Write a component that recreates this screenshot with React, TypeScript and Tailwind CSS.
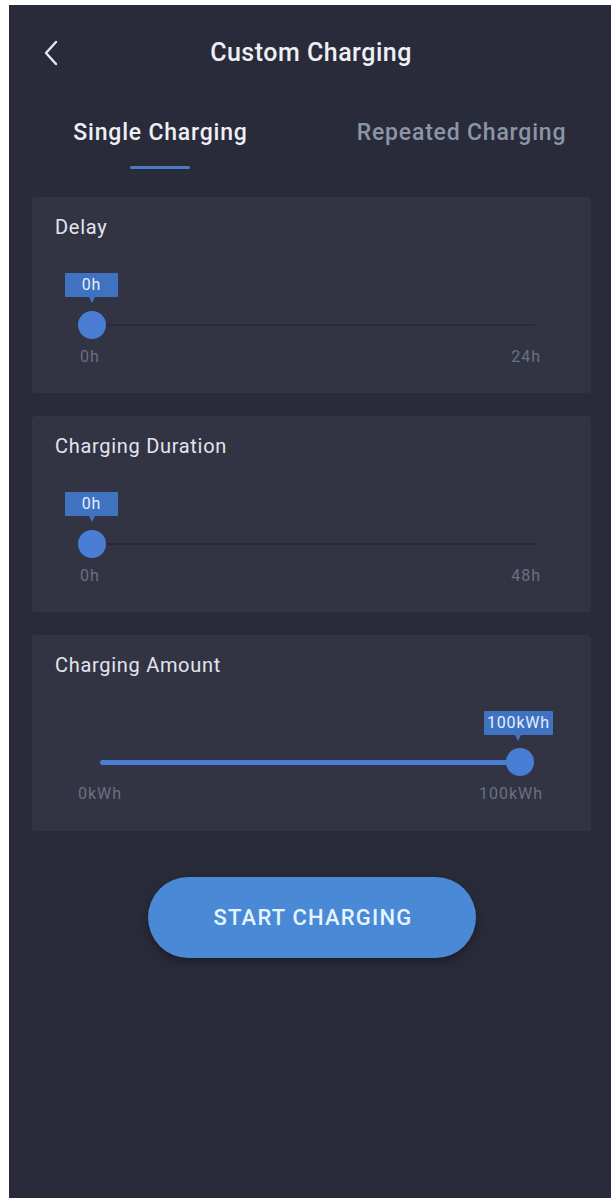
import React from "react";

const font = { fontFamily: "Roboto, 'Noto Sans', Arial, sans-serif" };

function Bubble({ text, className }: { text: string; className: string }) {
  return (
    <div className={"absolute flex flex-col items-center " + className}>
      <div className="bg-[#3f73c2] text-[#e4eeff] text-[16px] tracking-[0.8px] leading-[24px] px-[3px] min-w-[53px] text-center rounded-[1px]">
        {text}
      </div>
      <div className="w-0 h-0 border-l-[3px] border-r-[3px] border-t-[6px] border-l-transparent border-r-transparent border-t-[#3f73c2]" />
    </div>
  );
}

function Card({
  title,
  children,
}: {
  title: string;
  children: React.ReactNode;
}) {
  return (
    <div className="ml-[23px] mr-[20px] h-[196px] bg-[#323444] rounded-[4px] relative">
      <div className="pt-[17px] pl-[23px] text-[20px] tracking-[0.7px] leading-[26px] text-[#e3e5ec]">
        {title}
      </div>
      {children}
    </div>
  );
}

const label = "absolute text-[16px] tracking-[1px] leading-[20px] text-[#6b7082]";

function ZeroSlider({ max }: { max: string }) {
  return (
    <div className="absolute left-0 right-0 top-[76px] h-[100px]">
      <Bubble text="0h" className="left-[33px] top-0" />
      <div className="absolute left-[61px] w-[442px] top-[51px] h-[2px] bg-[#282a37]" />
      <div className="absolute left-[46px] top-[38px] w-[28px] h-[28px] rounded-full bg-[#4a7dd4]" />
      <div className={label + " left-[48px] top-[74px]"}>0h</div>
      <div className={label + " right-[50px] top-[74px]"}>{max}</div>
    </div>
  );
}

export default function App() {
  return (
    <div className="w-[614px] h-[1198px] bg-white pl-[9px] pt-[5px] pr-[3px]" style={font}>
      <div className="h-full bg-[#2a2b3a] flex flex-col">
        {/* Header */}
        <div className="h-[92px] relative flex items-center justify-center pt-[3px]">
          <svg
            className="absolute left-[35px] top-[35px]"
            width="14"
            height="26"
            viewBox="0 0 14 26"
            fill="none"
          >
            <path d="M12 2 L2 13 L12 24" stroke="#e8e9ef" strokeWidth="2.4" strokeLinecap="round" strokeLinejoin="round" />
          </svg>
          <div className="text-[25px] tracking-[0.5px] font-medium text-[#eef0f5] leading-[30px] ml-[2px]">Custom Charging</div>
        </div>
        {/* Tabs */}
        <div className="grid grid-cols-2 h-[100px]">
          <div className="flex flex-col items-center pt-[21px]">
            <div className="text-[23px] tracking-[0.8px] leading-[30px] font-medium text-[#eef0f5] pl-[2px]">Single Charging</div>
            <div className="mt-[18px] w-[60px] h-[3px] bg-[#4a7cc2] rounded-full" />
          </div>
          <div className="flex flex-col items-center pt-[21px]">
            <div className="text-[23px] tracking-[0.8px] leading-[30px] font-medium text-[#8b95a8] pl-[2px]">Repeated Charging</div>
          </div>
        </div>

        <div className="flex flex-col gap-[23px]">
          <Card title="Delay">
            <ZeroSlider max="24h" />
          </Card>
          <Card title="Charging Duration">
            <ZeroSlider max="48h" />
          </Card>
          <Card title="Charging Amount">
            <div className="absolute left-0 right-0 top-[76px] h-[100px]">
              <Bubble text="100kWh" className="left-[452px] top-0" />
              <div className="absolute left-[68px] w-[420px] top-[49px] h-[5px] rounded-full bg-[#4a7dd4]" />
              <div className="absolute left-[474px] top-[37px] w-[28px] h-[28px] rounded-full bg-[#4a7dd4]" />
              <div className={label + " left-[46px] top-[73px]"}>0kWh</div>
              <div className={label + " right-[48px] top-[73px]"}>100kWh</div>
            </div>
          </Card>
        </div>

        <div className="mt-[46px] ml-[139px] w-[328px] h-[81px] rounded-full bg-[#4a89d6] shadow-[0_4px_10px_rgba(0,0,0,0.35)] flex items-center justify-center">
          <span className="text-[22px] font-medium text-[#e6f4ff] tracking-[1.2px] ml-[2px]">START CHARGING</span>
        </div>
      </div>
    </div>
  );
}
